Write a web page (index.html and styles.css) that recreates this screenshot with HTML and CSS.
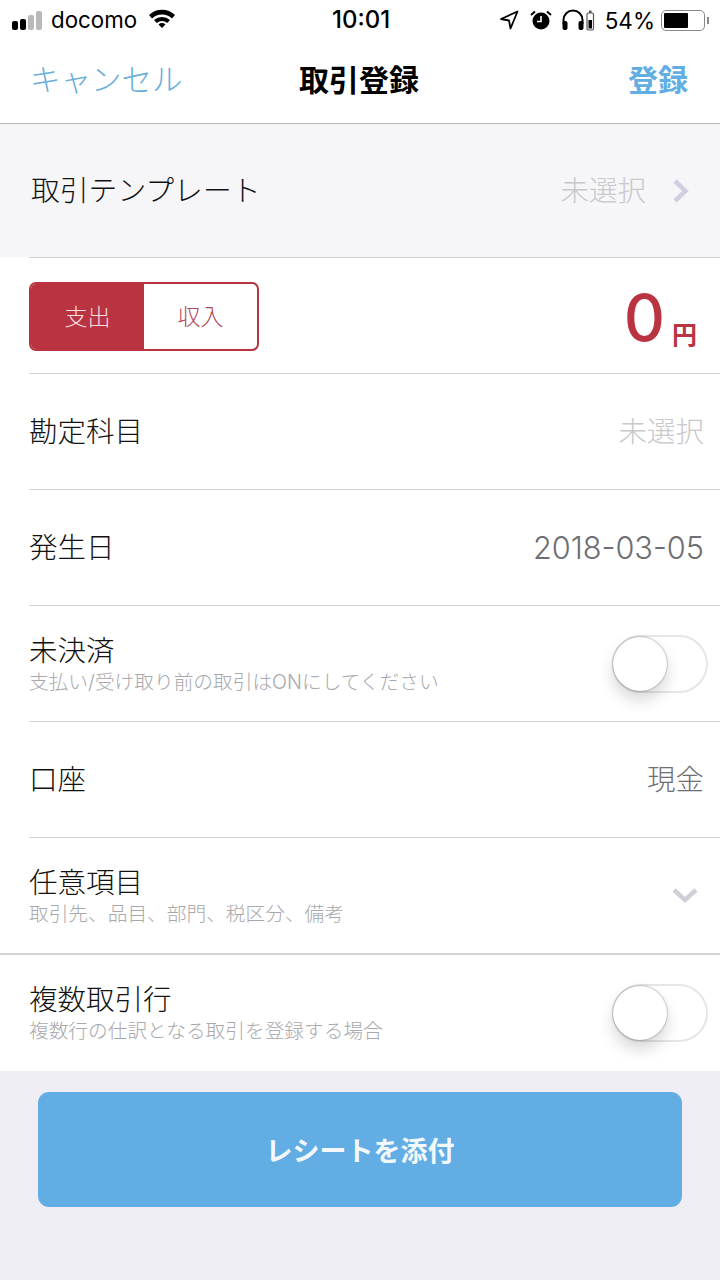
FILE: index.html
```html
<!DOCTYPE html>
<html lang="ja">
<head>
    <meta charset="UTF-8">
    <meta name="viewport" content="width=device-width, initial-scale=1.0">
    <title>取引登録</title>
    <link rel="stylesheet" href="styles.css">
</head>
<body>

    <div class="status-bar">
        <div class="status-left">
            <div class="signal">
                <span class="dot"></span>
                <span class="dot mid"></span>
                <span class="dot off tall"></span>
                <span class="dot off taller"></span>
            </div>
            <span class="carrier">docomo</span>
            <svg class="wifi" width="28" height="20" viewBox="0 0 28 20">
                <path d="M1 7 A19 19 0 0 1 27 7 L24 10.5 A14.5 14.5 0 0 0 4 10.5 Z" fill="#000"/>
                <path d="M6 12 A12 12 0 0 1 22 12 L19.2 15 A8 8 0 0 0 8.8 15 Z" fill="#000"/>
                <path d="M10.5 16.4 A5 5 0 0 1 17.5 16.4 L14 20 Z" fill="#000"/>
            </svg>
        </div>
        <div class="status-time">10:01</div>
        <div class="status-right">
            <svg width="20" height="20" viewBox="0 0 20 20">
                <path d="M18.5 1.5 L2 9 L10 10.5 L11.5 18.5 Z" fill="none" stroke="#000" stroke-width="1.8" stroke-linejoin="round"/>
            </svg>
            <svg class="alarm" width="22" height="20" viewBox="0 0 22 20">
                <circle cx="11" cy="11" r="8.5" fill="#000"/>
                <path d="M11 6 V11.5 H7" fill="none" stroke="#fff" stroke-width="1.6"/>
                <path d="M1 5 L5 1.5 M21 5 L17 1.5" stroke="#000" stroke-width="2"/>
            </svg>
            <svg class="phones" width="34" height="22" viewBox="0 0 34 22">
                <path d="M2.5 15 V11 A9.5 9.5 0 0 1 21.500 11 V15" fill="none" stroke="#000" stroke-width="2"/>
                <rect x="1.500" y="12" width="5" height="9" rx="2" fill="#000"/>
                <rect x="17.500" y="12" width="5" height="9" rx="2" fill="#000"/>
                <rect x="26" y="4" width="6.500" height="17" rx="1.500" fill="none" stroke="#555" stroke-width="1.200"/>
                <rect x="28" y="1.500" width="2.500" height="2.500" fill="#555"/>
                <rect x="27.500" y="11" width="3.500" height="8.500" fill="#000"/>
            </svg>
            <span class="percent">54%</span>
            <div class="battery"><div class="battery-level"></div></div>
            <span class="battery-cap"></span>
        </div>
    </div>

    <div class="nav-bar">
        <span class="nav-cancel">キャンセル</span>
        <span class="nav-title">取引登録</span>
        <span class="nav-save">登録</span>
    </div>

    <div class="template-row">
        <span class="label template-label">取引テンプレート</span>
        <div class="template-value">
            <span class="placeholder">未選択</span>
            <svg class="chevron" width="18" height="26" viewBox="0 0 18 26">
                <path d="M3 3 L13.500 13 L3 23" fill="none" stroke="#cfcfe0" stroke-width="4.500"/>
            </svg>
        </div>
    </div>

    <div class="form">
        <div class="row amount-row">
            <div class="segment">
                <span class="seg seg-on">支出</span>
                <span class="seg">収入</span>
            </div>
            <div class="amount"><span class="amount-num">0</span><span class="amount-unit">円</span></div>
        </div>
        <div class="row">
            <span class="label">勘定科目</span>
            <span class="placeholder">未選択</span>
        </div>
        <div class="row">
            <span class="label">発生日</span>
            <span class="value date">2018-03-05</span>
        </div>
        <div class="row">
            <div class="stack">
                <span class="label">未決済</span>
                <span class="sub">支払い/受け取り前の取引はONにしてください</span>
            </div>
            <div class="toggle"><div class="knob"></div></div>
        </div>
        <div class="row">
            <span class="label">口座</span>
            <span class="value">現金</span>
        </div>
        <div class="row row-optional">
            <div class="stack">
                <span class="label">任意項目</span>
                <span class="sub">取引先、品目、部門、税区分、備考</span>
            </div>
            <svg class="chevron-down" width="26" height="16" viewBox="0 0 26 16">
                <path d="M2 2 L13 12 L24 2" fill="none" stroke="#cfcfd8" stroke-width="4.500"/>
            </svg>
        </div>
        <div class="row row-last">
            <div class="stack">
                <span class="label">複数取引行</span>
                <span class="sub">複数行の仕訳となる取引を登録する場合</span>
            </div>
            <div class="toggle"><div class="knob"></div></div>
        </div>
    </div>

    <div class="footer">
        <button class="receipt-btn" type="button">レシートを添付</button>
    </div>

</body>
</html>
```

FILE: styles.css
```css
* {
    box-sizing: border-box;
}

body {
    margin: 0;
    width: 720px;
    height: 1280px;
    overflow: hidden;
    background: #eeeef4;
    color: #111;
    font-family: "Inter", "Noto Sans CJK JP", sans-serif;
}

.status-bar {
    height: 40px;
    background: white;
    display: flex;
    align-items: center;
    justify-content: space-between;
    padding: 0 11px 0 12px;
    position: relative;
    color: #000;
}

.status-left,
.status-right {
    display: flex;
    align-items: center;
}

.signal {
    display: flex;
    align-items: flex-end;
    gap: 2px;
    height: 20px;
}

.dot {
    width: 6px;
    height: 9px;
    border-radius: 2px;
    background: #000;
}

.dot.mid {
    height: 11px;
}

.dot.off {
    background: #b9b9b9;
}

.dot.tall {
    height: 15px;
}

.dot.taller {
    height: 19px;
}

.carrier {
    font-size: 22.3px;
    margin-left: 9px;
    margin-top: -2px;
}

.wifi {
    margin-left: 11px;
    margin-top: -4px;
}

.status-time {
    position: absolute;
    left: 332px;
    top: 5px;
    font-size: 24px;
    font-weight: 500;
}

.alarm {
    margin-left: 11px;
}

.phones {
    margin-left: 9px;
}

.percent {
    font-size: 22.5px;
    margin-left: 10px;
}

.battery {
    width: 44px;
    height: 21px;
    border: 1.500px solid #888;
    border-radius: 5px;
    padding: 2px;
    margin-left: 6px;
}

.battery-level {
    width: 24px;
    height: 100%;
    background: #000;
    border-radius: 1px;
}

.battery-cap {
    width: 2px;
    height: 7px;
    background: #888;
    margin-left: 2px;
}

.nav-bar {
    height: 84px;
    background: white;
    border-bottom: 1px solid #b5b5b8;
    display: flex;
    align-items: center;
    justify-content: space-between;
    padding: 0 32px 8px 30px;
    font-size: 30px;
}

.nav-cancel {
    color: #6aaedb;
    width: 156px;
    font-size: 30.5px;
    font-weight: 300;
}

.nav-title {
    font-weight: 700;
    color: #000;
}

.nav-save {
    color: #62ade3;
    font-weight: 700;
    width: 156px;
    text-align: right;
}

.template-row {
    height: 133px;
    background: #f6f6f9;
    display: flex;
    align-items: center;
    justify-content: space-between;
    padding: 0 30px 0 31px;
}

.template-value {
    display: flex;
    align-items: center;
    gap: 26px;
}

.label {
    font-size: 28.5px;
    line-height: 36px;
    color: #111;
    font-weight: 300;
}

.template-label {
    font-size: 28.8px;
}

.placeholder {
    font-size: 28.5px;
    line-height: 36px;
    color: #c8c8cd;
    font-weight: 300;
}

.value {
    font-size: 28.5px;
    line-height: 36px;
    color: #6e6e73;
    font-weight: 300;
}

.date {
    font-size: 30.7px;
}

.sub {
    font-size: 19.7px;
    line-height: 24px;
    margin-top: 3px;
    color: #a8a8ac;
    font-weight: 300;
}

.form {
    background: white;
    padding-left: 29px;
}

.row {
    height: 116px;
    border-top: 1px solid #d4d4d8;
    display: flex;
    align-items: center;
    justify-content: space-between;
    padding: 0 16px 0 0;
}

.row-optional {
    padding-right: 22px;
}

.row-last {
    height: 118px;
    border-top: 2px solid #d4d4d8;
    margin-left: -29px;
    padding-left: 29px;
}

.stack {
    display: flex;
    flex-direction: column;
    margin-top: 1px;
}

.stack .label {
    line-height: 32px;
}

.segment {
    display: flex;
    width: 230px;
    height: 69px;
    margin-top: 1px;
    border: 2px solid #b93440;
    border-radius: 7px;
    overflow: hidden;
}

.seg {
    flex: 1;
    display: flex;
    align-items: center;
    justify-content: center;
    font-size: 23px;
    line-height: 30px;
    padding-top: 2px;
    color: #b24a58;
    font-weight: 300;
}

.seg-on {
    background: #b93440;
    color: #f6dfe1;
}

.amount {
    display: flex;
    align-items: flex-end;
    color: #b93440;
    margin-top: 4px;
    margin-right: 7px;
}

.amount-num {
    font-size: 64px;
    line-height: 70px;
    font-weight: 500;
}

.amount-unit {
    font-size: 25px;
    line-height: 28px;
    font-weight: 700;
    margin-left: 7px;
    margin-bottom: 4px;
}

.toggle {
    width: 96px;
    height: 58px;
    margin-right: -4px;
    border: 2px solid #e6e6e6;
    border-radius: 29px;
    background: white;
    position: relative;
}

.knob {
    position: absolute;
    left: -1px;
    top: 0;
    width: 54px;
    height: 54px;
    border-radius: 50%;
    background: white;
    box-shadow: 0 0 2px rgba(0, 0, 0, 0.5), 0 9px 16px rgba(0, 0, 0, 0.16);
}

.footer {
    padding: 21px 38px 0;
}

.receipt-btn {
    display: block;
    width: 644px;
    height: 115px;
    border: none;
    border-radius: 11px;
    background: #62ade3;
    color: #f3f8fc;
    font-family: inherit;
    font-size: 27px;
    font-weight: 700;
}
```
